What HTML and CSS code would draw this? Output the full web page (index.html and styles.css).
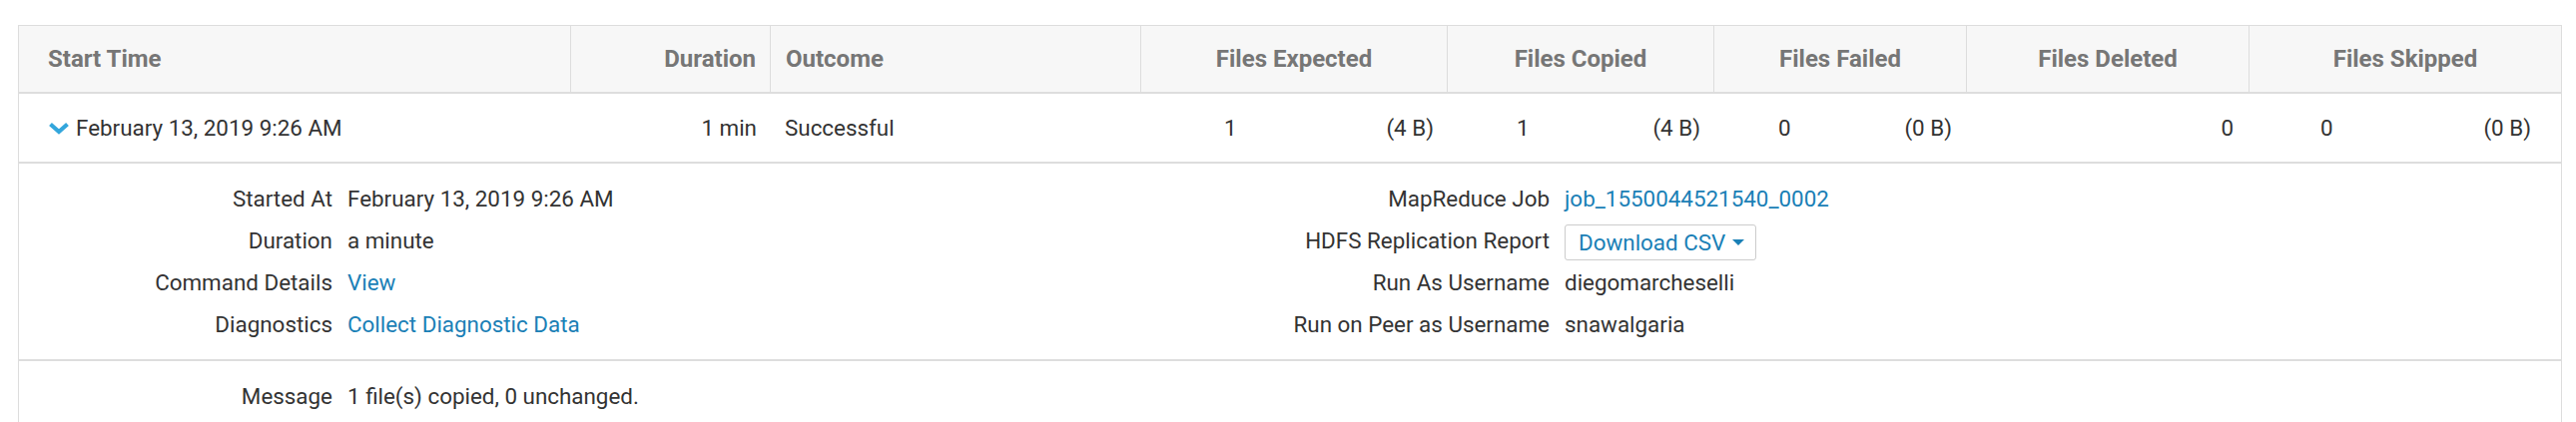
FILE: index.html
```html
<!DOCTYPE html>
<html lang="en">
<head>
<meta charset="utf-8">
<title>Replication History</title>
<link rel="stylesheet" href="styles.css">
</head>
<body>
<div class="page">
  <div class="tbl">
    <div class="thead">
      <div class="th first">Start Time</div>
      <div class="th right">Duration</div>
      <div class="th">Outcome</div>
      <div class="th center">Files Expected</div>
      <div class="th center">Files Copied</div>
      <div class="th center">Files Failed</div>
      <div class="th center">Files Deleted</div>
      <div class="th center">Files Skipped</div>
    </div>
    <div class="trow">
      <div class="td first"><svg class="chev" width="22" height="13" viewBox="0 0 22 13"><path d="M2.5 2.5 L11 10 L19.5 2.5" fill="none" stroke="#33a6dc" stroke-width="4.2" stroke-linecap="butt"/></svg>February 13, 2019 9:26 AM</div>
      <div class="td right">1 min</div>
      <div class="td">Successful</div>
      <div class="td files exp"><span>1</span><span>(4 B)</span></div>
      <div class="td files cop"><span>1</span><span>(4 B)</span></div>
      <div class="td files fail"><span>0</span><span>(0 B)</span></div>
      <div class="td files del"><span>0</span></div>
      <div class="td files skip"><span>0</span><span>(0 B)</span></div>
    </div>
    <div class="details">
      <dl class="group left">
        <dt>Started At</dt><dd>February 13, 2019 9:26 AM</dd>
        <dt>Duration</dt><dd>a minute</dd>
        <dt>Command Details</dt><dd><a href="#">View</a></dd>
        <dt>Diagnostics</dt><dd><a href="#">Collect Diagnostic Data</a></dd>
      </dl>
      <dl class="group rightgrp">
        <dt>MapReduce Job</dt><dd><a href="#">job_1550044521540_0002</a></dd>
        <dt>HDFS Replication Report</dt><dd><button class="btn" type="button">Download CSV <span class="caret"></span></button></dd>
        <dt>Run As Username</dt><dd>diegomarcheselli</dd>
        <dt>Run on Peer as Username</dt><dd>snawalgaria</dd>
      </dl>
    </div>
    <div class="message">
      <dl class="group left">
        <dt>Message</dt><dd>1 file(s) copied, 0 unchanged.</dd>
      </dl>
    </div>
  </div>
</div>
</body>
</html>
```
FILE: styles.css
```css
* { box-sizing: border-box; }
html, body { margin: 0; padding: 0; background: #fff; }
body {
  font-family: Roboto, "Liberation Sans", sans-serif;
  font-size: 22.4px;
  color: #333;
}
.page { padding: 25px 14px 0 18px; }
.tbl {
  border: 1px solid #ddd;
  border-bottom: none;
}
.thead, .trow {
  display: grid;
  grid-template-columns: 552px 200px 371px 307px 267px 253px 283px 1fr;
}
.thead {
  background: #f7f7f7;
  border-bottom: 2px solid #ddd;
  height: 68px;
}
.th {
  display: flex;
  align-items: center;
  padding: 0 15px;
  font-size: 24px;
  font-weight: 700;
  color: #767676;
  border-left: 1px solid #ddd;
  white-space: nowrap;
}
.th.first { border-left: none; padding-left: 29px; }
.th.right { justify-content: flex-end; padding-right: 14px; }
.th.center { justify-content: center; }
.trow {
  height: 70px;
  border-bottom: 2px solid #ddd;
}
.td {
  display: flex;
  align-items: center;
  padding: 0 15px;
  white-space: nowrap;
}
.td.first { padding-left: 29px; }
.chev { margin-right: 6px; flex: none; }
.td.right { justify-content: flex-end; padding-right: 13px; }
.td.files { justify-content: space-between; padding-right: 13px; }
.td.exp { padding-left: 84px; }
.td.cop { padding-left: 70px; }
.td.fail { padding-left: 65px; padding-right: 14px; }
.td.del { justify-content: flex-end; padding-right: 15px; }
.td.skip { padding-left: 72px; padding-right: 30px; }

.details {
  display: grid;
  grid-template-columns: 1fr 1fr;
  padding: 14px 0;
  border-bottom: 2px solid #ddd;
}
.message { padding: 14px 0 14px; }
.group {
  margin: 0;
  display: grid;
  column-gap: 15px;
  align-items: center;
}
.group.left { grid-template-columns: 314px auto; justify-content: start; }
.group.rightgrp { grid-template-columns: 260px auto; justify-content: start; }
.group dt, .group dd {
  margin: 0;
  height: 42px;
  line-height: 42px;
  white-space: nowrap;
}
.group dt { text-align: right; }
.group dd { display: flex; align-items: center; }
a { color: #1a80b6; text-decoration: none; }
.btn {
  font: inherit;
  color: #1a80b6;
  background: #fff;
  border: 1px solid #ccc;
  border-radius: 3px;
  height: 36px;
  padding: 0 11px 0 13px;
  display: inline-flex;
  align-items: center;
  margin-top: 4px;
  margin-left: 0;
}
.caret {
  display: inline-block;
  width: 0;
  height: 0;
  margin-left: 7px;
  border-left: 6px solid transparent;
  border-right: 6px solid transparent;
  border-top: 6px solid #1a80b6;
}
```
